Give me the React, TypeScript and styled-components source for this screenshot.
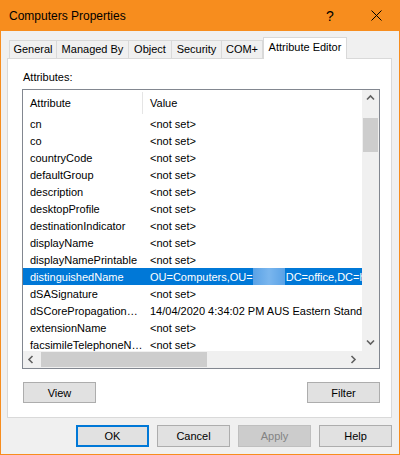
import React from 'react'
import styled, { createGlobalStyle } from 'styled-components'

const GlobalStyle = createGlobalStyle`
  body {
    margin: 0;
    font-family: "Liberation Sans", Arial, sans-serif;
    font-size: 11px;
    color: #000;
  }
`

const ORANGE = '#f78d1e'

interface IRow {
  name: string
  value: string
  selected?: boolean
}

const rows: IRow[] = [
  { name: 'cn', value: '<not set>' },
  { name: 'co', value: '<not set>' },
  { name: 'countryCode', value: '<not set>' },
  { name: 'defaultGroup', value: '<not set>' },
  { name: 'description', value: '<not set>' },
  { name: 'desktopProfile', value: '<not set>' },
  { name: 'destinationIndicator', value: '<not set>' },
  { name: 'displayName', value: '<not set>' },
  { name: 'displayNamePrintable', value: '<not set>' },
  { name: 'distinguishedName', value: 'dn', selected: true },
  { name: 'dSASignature', value: '<not set>' },
  { name: 'dSCorePropagationData', value: '14/04/2020 4:34:02 PM AUS Eastern Standard Time' },
  { name: 'extensionName', value: '<not set>' },
  { name: 'facsimileTelephoneNumber', value: '<not set>' },
]

const tabs = [
  { label: 'General', width: 48 },
  { label: 'Managed By', width: 72 },
  { label: 'Object', width: 43 },
  { label: 'Security', width: 50 },
  { label: 'COM+', width: 41 },
  { label: 'Attribute Editor', width: 84, active: true },
]

const Chevron = ({ dir }: { dir: 'up' | 'down' | 'left' | 'right' }) => {
  const d = {
    up: 'M1 5.5 L4.5 2 L8 5.5',
    down: 'M1 2.5 L4.5 6 L8 2.5',
    left: 'M5.5 1 L2 4.5 L5.5 8',
    right: 'M2.5 1 L6 4.5 L2.5 8',
  }[dir]
  return (
    <svg width='9' height='9' viewBox='0 0 9 9'>
      <path d={d} fill='none' stroke='#606060' strokeWidth='1.6' />
    </svg>
  )
}

const App = () => {
  return (
    <Window>
      <GlobalStyle />
      <TitleBar>
        <Title>Computers Properties</Title>
        <HelpGlyph>?</HelpGlyph>
        <CloseBox>
          <svg width='11' height='11' viewBox='0 0 11 11'>
            <path d='M0.5 0.5 L10.5 10.5 M10.5 0.5 L0.5 10.5' stroke='#000' strokeWidth='1' />
          </svg>
        </CloseBox>
      </TitleBar>
      <Client>
        <TabRow>
          {tabs.map((t) => (
            <Tab key={t.label} active={t.active} width={t.width}>
              {t.label}
            </Tab>
          ))}
        </TabRow>
        <Panel>
          <Label>Attributes:</Label>
          <ListBox>
            <ListContent>
              <HeaderRow>
                <HeaderCell>Attribute</HeaderCell>
                <HeaderDivider />
                <HeaderCell>Value</HeaderCell>
              </HeaderRow>
              {rows.map((r) => (
                <Row key={r.name} selected={r.selected}>
                  <NameCell>{r.name}</NameCell>
                  <ValueCell>
                    {r.value === 'dn' ? (
                      <>
                        OU=Computers,OU=<Redacted />DC=office,DC=hhh,DC=local
                      </>
                    ) : (
                      r.value
                    )}
                  </ValueCell>
                </Row>
              ))}
            </ListContent>
            <VScroll>
              <ArrowBox>
                <Chevron dir='up' />
              </ArrowBox>
              <VTrack>
                <VThumb />
              </VTrack>
              <ArrowBox>
                <Chevron dir='down' />
              </ArrowBox>
            </VScroll>
            <HScroll>
              <ArrowBox>
                <Chevron dir='left' />
              </ArrowBox>
              <HTrack>
                <HThumb />
              </HTrack>
              <ArrowBox>
                <Chevron dir='right' />
              </ArrowBox>
            </HScroll>
            <Corner />
          </ListBox>
          <PanelButtons>
            <Button>View</Button>
            <Button>Filter</Button>
          </PanelButtons>
        </Panel>
        <DialogButtons>
          <Button primary>OK</Button>
          <Button>Cancel</Button>
          <Button disabled>Apply</Button>
          <Button>Help</Button>
        </DialogButtons>
      </Client>
    </Window>
  )
}

const Window = styled.div`
  width: 400px;
  height: 455px;
  box-sizing: border-box;
  border: 1px solid ${ORANGE};
  border-top: none;
  background: #f0f0f0;
  display: flex;
  flex-direction: column;
`

const TitleBar = styled.div`
  height: 31px;
  background: ${ORANGE};
  display: flex;
  align-items: center;
  padding-left: 9px;
  margin: 0 -1px;
`

const Title = styled.div`
  font-size: 12px;
  flex: 1;
`

const HelpGlyph = styled.div`
  font-size: 14px;
  width: 46px;
  text-align: center;
`

const CloseBox = styled.div`
  width: 46px;
  height: 31px;
  display: flex;
  align-items: center;
  justify-content: center;
  margin-right: 1px;
`

const Client = styled.div`
  flex: 1;
  display: flex;
  flex-direction: column;
  padding: 6px 7px 0 6px;
`

const TabRow = styled.div`
  display: flex;
  align-items: flex-end;
  height: 21px;
  padding-left: 2px;
  position: relative;
  z-index: 1;
`

const Tab = styled.div<{ active?: boolean; width: number }>`
  box-sizing: border-box;
  width: ${(p) => p.width}px;
  height: ${(p) => (p.active ? '22px' : '18px')};
  margin-bottom: ${(p) => (p.active ? '-1px' : '0')};
  padding-top: ${(p) => (p.active ? '3px' : '2px')};
  text-align: center;
  background: ${(p) => (p.active ? '#fff' : '#f0f0f0')};
  border: 1px solid #d9d9d9;
  border-bottom: none;
  border-left: ${(p) => (p.active ? '1px solid #d9d9d9' : 'none')};
  &:first-child {
    border-left: 1px solid #d9d9d9;
  }
  white-space: nowrap;
  line-height: 13px;
`

const Panel = styled.div`
  box-sizing: border-box;
  height: 360px;
  background: #fff;
  border: 1px solid #d9d9d9;
  padding: 12px 11px 0 14px;
  display: flex;
  flex-direction: column;
`

const Label = styled.div`
  line-height: 13px;
  margin-left: 1px;
`

const ListBox = styled.div`
  margin-top: 5px;
  height: 280px;
  box-sizing: border-box;
  border: 1px solid #828790;
  display: grid;
  grid-template-columns: 1fr 17px;
  grid-template-rows: 1fr 17px;
`

const ListContent = styled.div`
  overflow: hidden;
`

const HeaderRow = styled.div`
  height: 25px;
  display: flex;
  align-items: center;
`

const HeaderCell = styled.div`
  padding-left: 7px;
  width: 113px;
`

const HeaderDivider = styled.div`
  width: 1px;
  height: 22px;
  background: #e5e5e5;
  margin-left: -1px;
`

const Row = styled.div<{ selected?: boolean }>`
  height: 17px;
  display: flex;
  align-items: center;
  white-space: nowrap;
  background: ${(p) => (p.selected ? '#0078d7' : 'transparent')};
  color: ${(p) => (p.selected ? '#fff' : '#000')};
`

const NameCell = styled.div`
  width: 113px;
  padding-left: 7px;
  overflow: hidden;
  text-overflow: ellipsis;
  flex-shrink: 0;
`

const ValueCell = styled.div`
  padding-left: 7px;
  overflow: hidden;
  display: flex;
  align-items: center;
`

const Redacted = styled.span`
  display: inline-block;
  flex-shrink: 0;
  width: 32px;
  height: 17px;
  margin-right: 1px;
  background: linear-gradient(90deg, #5aa2e6, #7ab6ee 50%, #5aa2e6);
`

const VScroll = styled.div`
  background: #f0f0f0;
  display: flex;
  flex-direction: column;
`

const HScroll = styled.div`
  background: #f0f0f0;
  display: flex;
`

const ArrowBox = styled.div`
  width: 17px;
  height: 17px;
  display: flex;
  align-items: center;
  justify-content: center;
  flex-shrink: 0;
`

const VTrack = styled.div`
  flex: 1;
  padding: 11px 1px 0;
`

const VThumb = styled.div`
  height: 34px;
  background: #cdcdcd;
`

const HTrack = styled.div`
  flex: 1;
  padding: 1px 0;
  display: flex;
`

const HThumb = styled.div`
  width: 166px;
  margin-left: 1px;
  background: #cdcdcd;
`

const Corner = styled.div`
  background: #f0f0f0;
`

const PanelButtons = styled.div`
  margin-top: 13px;
  display: flex;
  justify-content: space-between;
  padding-left: 1px;
`

const Button = styled.button<{ primary?: boolean }>`
  box-sizing: border-box;
  width: 73px;
  height: 21px;
  font-family: "Liberation Sans", Arial, sans-serif;
  font-size: 11px;
  color: #000;
  background: #e1e1e1;
  border: 1px solid #adadad;
  padding: 0;
  border-radius: 0;
  ${(p) => p.primary && 'border: 2px solid #0078d7;'}
  &:disabled {
    background: #cccccc;
    border-color: #bfbfbf;
    color: #838383;
  }
`

const DialogButtons = styled.div`
  margin-top: 7px;
  display: flex;
  justify-content: flex-end;
  gap: 8px;
  & > button {
    height: 22px;
  }
`

export default App
